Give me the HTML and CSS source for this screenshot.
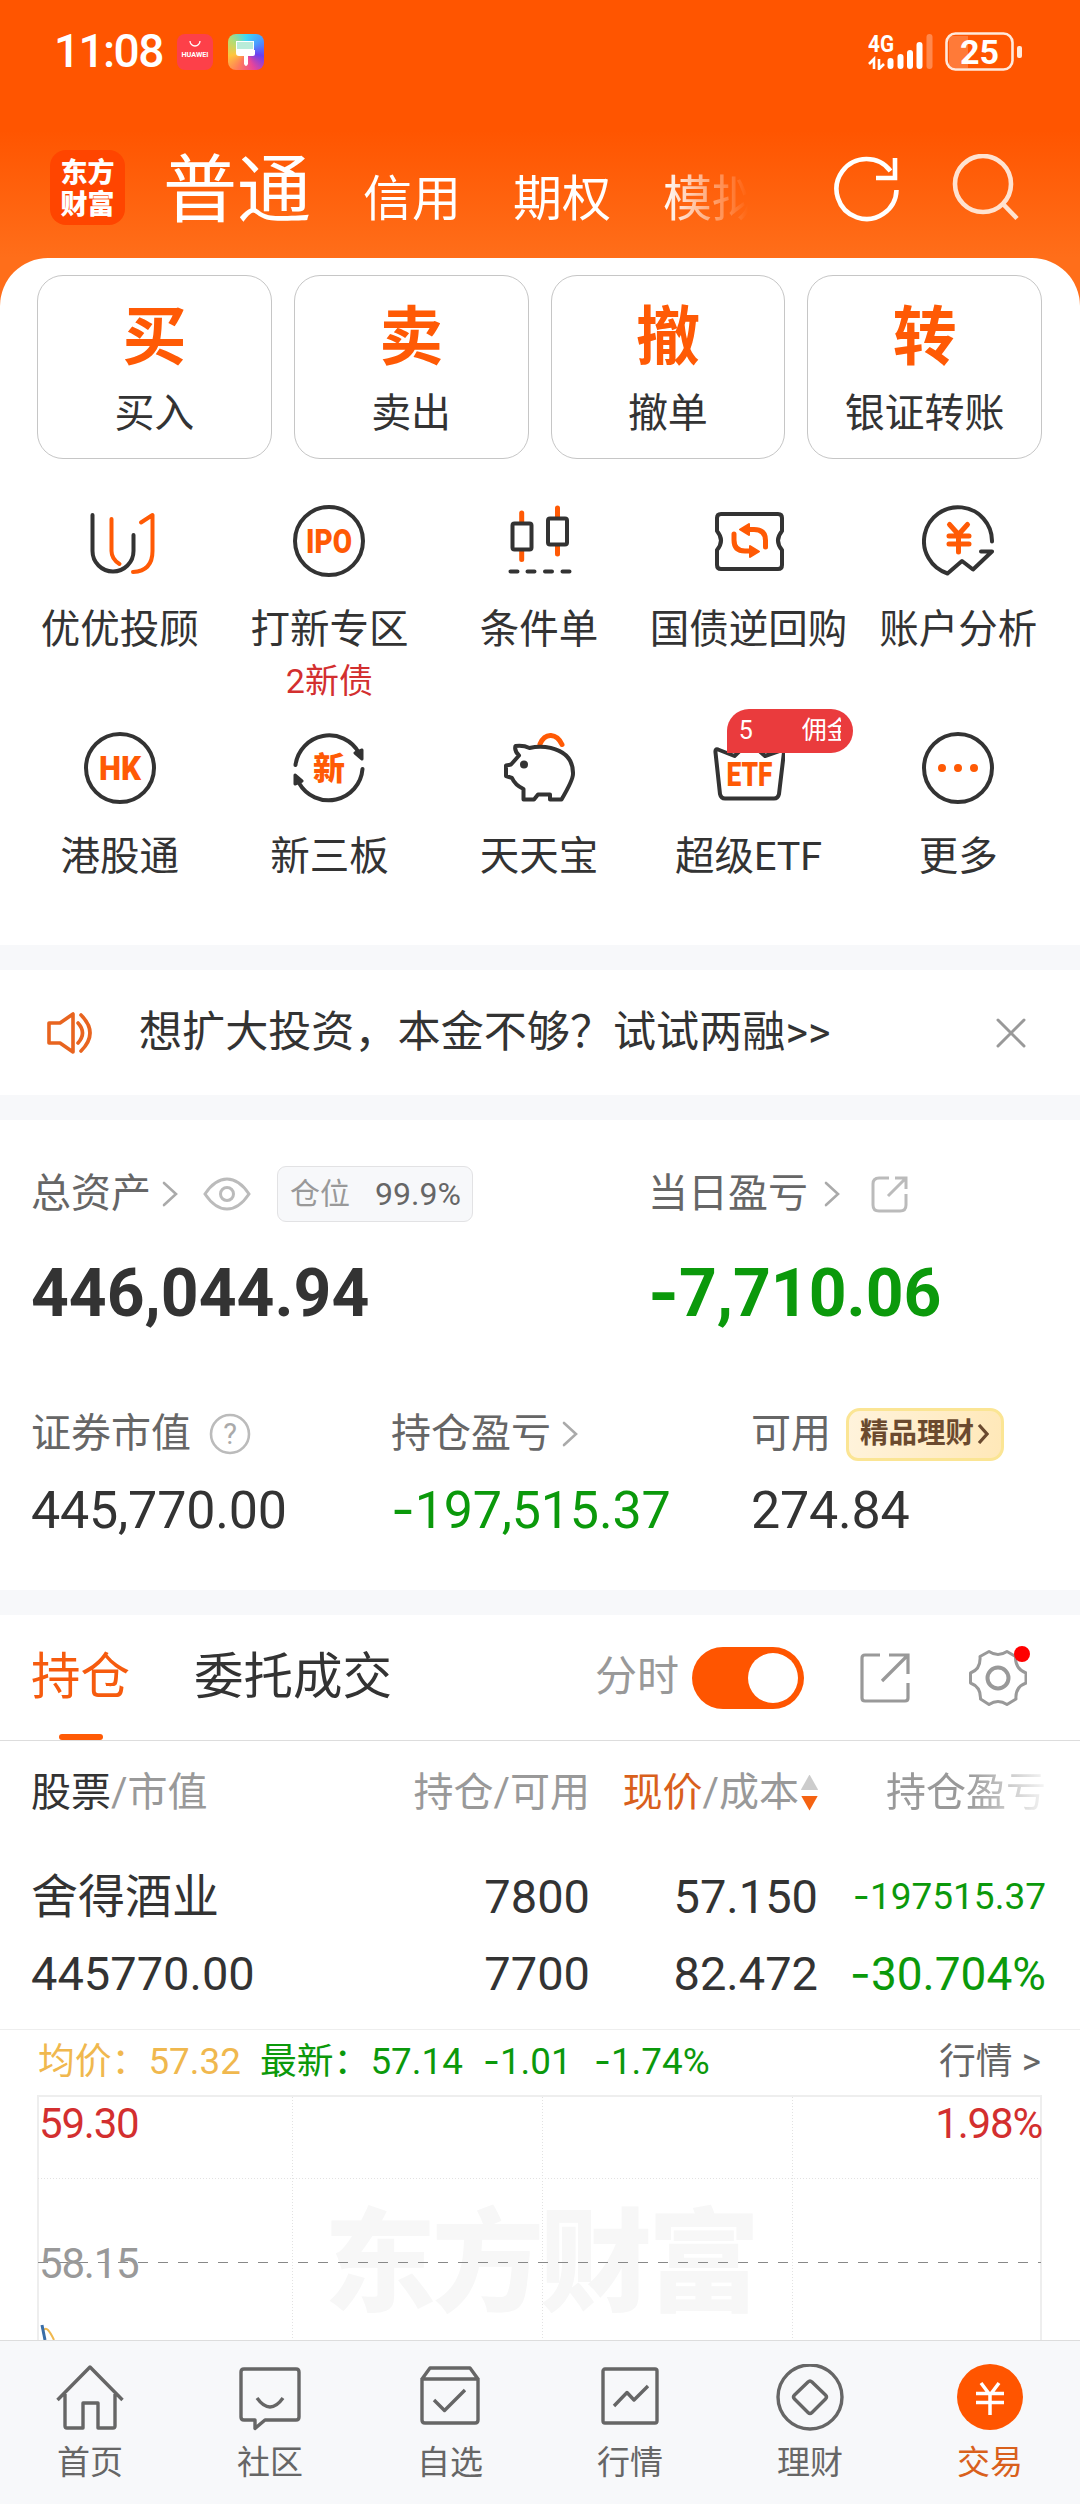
FILE: index.html
```html
<!DOCTYPE html>
<html lang="zh-CN">

<head>
    <meta charset="UTF-8">
    <meta name="viewport" content="width=device-width, initial-scale=1.0">
    <title>东方财富 - 交易</title>
    <link rel="stylesheet" href="styles.css">
</head>

<body>
    <svg class="defs">
        <symbol id="chevron" viewBox="0 0 16 26">
            <path d="M2 2l12 11L2 24" fill="none" stroke="currentColor" stroke-width="2.6" stroke-linecap="round" />
        </symbol>
    </svg>

    <div class="top">
        <!-- status bar -->
        <div class="status-bar">
            <span class="time">11:08</span>
            <svg class="app-icon" width="36" height="36" viewBox="0 0 36 36">
                <rect width="36" height="36" rx="8" fill="#fd4049" />
                <path d="M13 7a5 5 0 0 0 10 0" fill="none" stroke="#fff" stroke-width="1.3" />
                <text x="4.500" y="23" textLength="27" lengthAdjust="spacingAndGlyphs" font-size="7" font-weight="bold" fill="#fff">HUAWEI</text>
            </svg>
            <div class="app-icon theme-icon">
                <svg width="36" height="36" viewBox="0 0 36 36">
                    <path d="M8 7h18v9h1v4q0 2-2 2h-5v8q-2 4-4 0v-8h-5q-3 0-3-3z" fill="#fff" />
                    <path d="M9 8h16v7H9z" fill="#b9ecd9" />
                </svg>
            </div>
            <div class="status-right">
                <svg width="70" height="36" viewBox="0 0 70 36">
                    <text x="0" y="18" class="net" textLength="26" lengthAdjust="spacingAndGlyphs">4G</text>
                    <path d="M6 35V25l-5 5M11 25v10l5-5" fill="none" stroke="#fff" stroke-width="2.6" />
                    <g stroke="#fff" stroke-width="6" stroke-linecap="round">
                        <path d="M22.500 27v5M32.500 23v9M42 19v13M51.500 11v21" />
                        <path d="M61.500 3v29" opacity=".3" />
                    </g>
                </svg>
                <svg width="78" height="40" viewBox="0 0 78 40">
                    <rect x="4" y="4" width="19" height="32" fill="#fff" opacity=".22" />
                    <rect x="1.500" y="1.500" width="66" height="36" rx="9" fill="none" stroke="#ffe9dc" stroke-width="2.600" />
                    <rect x="72" y="14" width="5" height="12" rx="2" fill="#ffe9dc" />
                    <text x="34.500" y="31.500" text-anchor="middle" class="battery">25</text>
                </svg>
            </div>
        </div>

        <!-- account tabs -->
        <div class="header">
            <div class="logo">东方<br>财富</div>
            <div class="account-tabs">
                <span class="current">普通</span>
                <span>信用</span>
                <span>期权</span>
                <span>模拟</span>
            </div>
            <svg class="refresh" width="66" height="68" viewBox="0 0 66 68" fill="none" stroke="#fff" stroke-width="4.600">
                <path d="M62.500 35a30 30 0 1 1-6-19" />
                <path d="M61 3v20H42" />
            </svg>
            <svg class="search" width="68" height="68" viewBox="0 0 68 68" fill="none" stroke="#ffe2d0" stroke-width="4.600">
                <circle cx="31" cy="30" r="28" />
                <path d="M51 50l14 14.500" />
            </svg>
        </div>
    </div>

    <div class="panel">
        <div class="trade-cards">
            <div class="card"><b>买</b><span>买入</span></div>
            <div class="card"><b>卖</b><span>卖出</span></div>
            <div class="card"><b>撤</b><span>撤单</span></div>
            <div class="card"><b>转</b><span>银证转账</span></div>
        </div>

        <div class="menu">
            <div class="menu-item">
                <svg class="icon" viewBox="0 0 72 72">
                    <path d="M8.500 10v36a20.500 20.500 0 0 0 41 0V30" />
                    <path class="hot" d="M27.500 14v32q0 8 8 13M57 17.500L68.500 10v36q0 20-19.500 21" />
                </svg>
                <p>优优投顾</p>
            </div>
            <div class="menu-item">
                <svg class="icon" viewBox="0 0 72 72">
                    <circle cx="36" cy="36" r="34" />
                    <text x="13" y="47.500" textLength="46" lengthAdjust="spacingAndGlyphs">IPO</text>
                </svg>
                <p>打新专区</p>
                <p class="tip">2新债</p>
            </div>
            <div class="menu-item">
                <svg class="icon" viewBox="0 0 72 72">
                    <path class="hot thick" d="M18.700 8v9M18.700 46v8.500M54.500 3v9M54.500 41v8" />
                    <rect x="9.500" y="18.500" width="19" height="26" rx="2" />
                    <rect x="45" y="13.500" width="19" height="26" rx="2" />
                    <path d="M7.500 66.500h7M24.500 66.500h7M42 66.500h7M59.500 66.500h7" />
                </svg>
                <p>条件单</p>
            </div>
            <div class="menu-item">
                <svg class="icon" viewBox="0 0 72 72">
                    <path d="M8 9h57q4 0 4 4v13q-8 9.500 0 19v15q0 4-4 4H8q-4 0-4-4V45q8-9.500 0-19V13q0-4 4-4z" />
                    <path class="hot thick" d="M36 24.500h5q11.500 0 11.500 11V42M21 29v6q0 11 11 11h5" />
                    <path class="hot fill" d="M27 24.500l9-5.500v11zM46 46.500l-9-5.500v11z" />
                </svg>
                <p>国债逆回购</p>
            </div>
            <div class="menu-item">
                <svg class="icon" viewBox="0 0 72 72">
                    <path d="M70 36.500A34 34 0 1 0 25.500 68.500L40 56l11 8.500 19-18H59" />
                    <path class="hot thick" d="M27.500 19.500l9 10 9-10M27 31h20M27 39h20M36.500 30v17" />
                </svg>
                <p>账户分析</p>
            </div>

            <div class="menu-item">
                <svg class="icon" viewBox="0 0 72 72">
                    <circle cx="36" cy="36" r="34" />
                    <text x="15" y="47.500" textLength="42" lengthAdjust="spacingAndGlyphs">HK</text>
                </svg>
                <p>港股通</p>
            </div>
            <div class="menu-item">
                <svg class="icon" viewBox="0 0 72 72">
                    <path d="M2.500 33A34 34 0 0 1 66 21M69.500 37A34 34 0 0 1 6 51" />
                    <path class="dark-fill" d="M69 27l-7-6 7-3zM2 43l7 6-7 3z" />
                    <text x="36" y="48" text-anchor="middle" class="xin">新</text>
                </svg>
                <p>新三板</p>
            </div>
            <div class="menu-item">
                <svg class="icon" viewBox="0 0 72 72">
                    <path class="hot thick" d="M37 12q4-9 11-8.500t11 9" />
                    <path d="M12.500 14q8-1 14 2 8-2 16-1 28 4 27.500 27 0 6-11.500 25.500H47v-5H35l-4 5H20.500V57Q12 53 9 46l-6-2V33.500l5-1 8-9q-5-5-3.500-9.500z" />
                    <circle class="dark-fill" cx="21" cy="32.500" r="2.500" />
                </svg>
                <p>天天宝</p>
            </div>
            <div class="menu-item">
                <svg class="icon" viewBox="0 0 72 72">
                    <path d="M21.500 24L5 17.500q-3-1-2.500 3L7 62q1 4.500 5 4.500h49q4 0 5-4.500l5-42q0-3-2-2l-17 6L36 10z" />
                    <text x="13.500" y="54" textLength="46" lengthAdjust="spacingAndGlyphs">ETF</text>
                </svg>
                <div class="badge"><span>5</span><span class="clip">佣金</span></div>
                <p>超级ETF</p>
            </div>
            <div class="menu-item">
                <svg class="icon" viewBox="0 0 72 72">
                    <circle cx="36" cy="36" r="34" />
                    <path class="hot dots" d="M20 36h0M36 36h0M52 36h0" />
                </svg>
                <p>更多</p>
            </div>
        </div>
    </div>

    <div class="notice">
        <svg width="48" height="44" viewBox="0 0 48 44" fill="none" stroke="#e8641f" stroke-width="3.600" stroke-linecap="round" stroke-linejoin="round">
            <path d="M3 12h11L27 3v38L14 32H3z" />
            <path d="M32 12q9 10 0 20M35 4q18 18 0 36" />
        </svg>
        <p>想扩大投资，本金不够？试试两融&gt;&gt;</p>
        <svg class="close" width="30" height="30" viewBox="0 0 30 30">
            <path d="M2 2l26 26M28 2L2 28" stroke="#999" stroke-width="3" stroke-linecap="round" />
        </svg>
    </div>

    <div class="assets">
        <div class="main-row">
            <div class="asset total">
                <div class="asset-label">
                    总资产
                    <svg class="chev"><use href="#chevron" /></svg>
                    <svg class="eye" width="48" height="34" viewBox="0 0 48 34" fill="none" stroke="#bbb" stroke-width="3">
                        <path d="M2 17Q12 2 24 2t22 15Q36 32 24 32T2 17z" />
                        <circle cx="24" cy="17" r="6.500" />
                    </svg>
                    <span class="ratio"><i>仓位</i>99.9%</span>
                </div>
                <div class="big-num">446,044.94</div>
            </div>
            <div class="asset">
                <div class="asset-label">
                    当日盈亏
                    <svg class="chev wide"><use href="#chevron" /></svg>
                    <svg class="share" width="37" height="37" viewBox="0 0 37 37" fill="none" stroke="#bbb" stroke-width="3">
                        <path d="M18 2H8Q2 2 2 8v21q0 6 6 6h21q6 0 6-6V18M17 20L34 3M24 2h11v11" />
                    </svg>
                </div>
                <div class="big-num down"><span class="minus">-</span>7,710.06</div>
            </div>
        </div>
        <div class="sub-row">
            <div class="asset">
                <div class="asset-label">
                    证券市值
                    <svg class="help" width="42" height="42" viewBox="0 0 42 42">
                        <circle cx="21" cy="21" r="19" fill="none" stroke="#bbb" stroke-width="2.600" />
                        <text x="21" y="31" text-anchor="middle">?</text>
                    </svg>
                </div>
                <div class="num">445,770.00</div>
            </div>
            <div class="asset">
                <div class="asset-label">
                    持仓盈亏
                    <svg class="chev near"><use href="#chevron" /></svg>
                </div>
                <div class="num down"><span class="minus">-</span>197,515.37</div>
            </div>
            <div class="asset">
                <div class="asset-label">
                    可用
                    <span class="wealth">精品理财<svg width="12" height="20" viewBox="0 0 12 20"><path d="M2 1l8 9-8 9" fill="none" stroke="#6b4a2f" stroke-width="3.200" /></svg></span>
                </div>
                <div class="num">274.84</div>
            </div>
        </div>
    </div>

    <div class="positions">
        <div class="pos-tabs">
            <span class="pos-tab active">持仓</span>
            <span class="pos-tab">委托成交</span>
            <div class="tools">
                <span>分时</span>
                <div class="switch"></div>
                <svg class="open" width="50" height="50" viewBox="0 0 50 50" fill="none" stroke="#999" stroke-width="3.200">
                    <path d="M20 2H5Q2 2 2 5v40q0 3 3 3h40q3 0 3-3V30M22 28L47 3M29 2h19v19" />
                </svg>
                <div class="gear">
                    <svg width="58" height="58" viewBox="0 0 58 58" fill="none" stroke="#999" stroke-width="3" stroke-linejoin="round">
                        <path d="M20 2.500q9 6 18 0l8.500 5Q46 20 57 24v10q-11 4-10 16l-9 5.500q-9-6-18 0L11.500 50Q12 38 1.500 34V24Q12 20 11 7.500z" />
                        <circle cx="29" cy="29" r="10.500" stroke-width="4" />
                    </svg>
                    <i class="dot"></i>
                </div>
            </div>
        </div>

        <div class="row row-head">
            <span><b>股票</b>/市值</span>
            <span>持仓/可用</span>
            <span class="sorted"><b class="hot-text">现价</b>/成本<i class="sort"></i></span>
            <span class="fade">持仓盈亏</span>
        </div>
        <div class="stock">
            <div class="row">
                <span class="name">舍得酒业</span>
                <span>7800</span>
                <span>57.150</span>
                <span class="down small"><span class="minus">-</span>197515.37</span>
            </div>
            <div class="row">
                <span>445770.00</span>
                <span>7700</span>
                <span>82.472</span>
                <span class="down rate"><span class="minus">-</span>30.704%</span>
            </div>
        </div>

        <div class="quote">
            <span class="avg">均价：57.32</span>
            <span class="last">最新：57.14</span>
            <span class="chg"><span class="minus">-</span>1.01</span>
            <span class="pct"><span class="minus">-</span>1.74%</span>
            <span class="more">行情 &gt;</span>
        </div>

        <svg class="chart" width="1008" height="245" viewBox="0 0 1008 245">
            <text class="watermark" x="288" y="208" textLength="436">东方财富</text>
            <path d="M2 245V1h1003v244" fill="none" stroke="#eee" stroke-width="2" />
            <path d="M256.500 2v243M506.500 2v243M756.500 2v243M2 83.500h1002" fill="none" stroke="#e2e2e2" stroke-dasharray="1 2" />
            <path d="M2 167.500h1003" stroke="#888" stroke-width="1" stroke-dasharray="10 10" />
            <text x="3" y="43" class="up">59.30</text>
            <text x="3" y="183" class="mid">58.15</text>
            <text x="1006" y="43" class="up" text-anchor="end">1.98%</text>
            <path d="M8 235q3-5 10 10" fill="none" stroke="#f0b84e" stroke-width="2" />
            <path d="M6 230l3 15" fill="none" stroke="#3a6ea8" stroke-width="3" />
        </svg>
    </div>

    <div class="nav">
        <div class="nav-item">
            <svg viewBox="0 0 68 68">
                <path d="M1.500 36L34 3l32.500 33M9 30v32q0 2 2 2h16V39h15v25h15q2 0 2-2V30" />
            </svg>
            <span>首页</span>
        </div>
        <div class="nav-item">
            <svg viewBox="0 0 68 68">
                <path d="M8 5h52q3 0 3 3v45q0 3-3 3H29l-10 8.500V56H8q-3 0-3-3V8q0-3 3-3z" />
                <path d="M21 34q13 18 26 0" />
            </svg>
            <span>社区</span>
        </div>
        <div class="nav-item">
            <svg viewBox="0 0 68 68">
                <path d="M6 14v42q0 3 3 3h50q3 0 3-3V14M6 15h56L54 4H14z" />
                <path d="M18 36l10.500 10.500L49 26" />
            </svg>
            <span>自选</span>
        </div>
        <div class="nav-item">
            <svg viewBox="0 0 68 68">
                <rect x="7" y="5" width="54" height="54" rx="2" />
                <path d="M18 42l13-13.500 7 7.500 14-14" />
            </svg>
            <span>行情</span>
        </div>
        <div class="nav-item">
            <svg viewBox="0 0 68 68">
                <circle cx="34" cy="33" r="32" />
                <path d="M32 18q2-2 4 0l13.500 13q2 2 0 4L36 48.500q-2 2-4 0L18.500 35q-2-2 0-4z" />
            </svg>
            <span>理财</span>
        </div>
        <div class="nav-item active">
            <svg viewBox="0 0 68 68">
                <circle class="coin" cx="34" cy="33" r="33" />
                <path class="yen" d="M25 19l9 12 9-12M20 29.500h28M20 38.500h28M34 30v21" />
            </svg>
            <span>交易</span>
        </div>
    </div>
</body>

</html>
```
FILE: styles.css
```css
* {
    box-sizing: border-box;
}

body {
    margin: 0;
    width: 1080px;
    background: #fff;
    color: #333;
    font-family: Roboto, "Noto Sans CJK SC", sans-serif;
    font-size: 40px;
    line-height: 1.2;
}

p {
    margin: 0;
}

i {
    font-style: normal;
}

svg {
    display: block;
    flex: none;
}

.defs {
    position: absolute;
    width: 0;
    height: 0;
}

/* top */

.top {
    height: 306px;
    margin-bottom: -48px;
    background: linear-gradient(#ff5500 130px, #ff6e1a 258px);
    color: #fff;
}

.status-bar {
    display: flex;
    align-items: center;
    height: 104px;
    padding: 0 57px 0 54px;
}

.time {
    width: 123px;
    font-size: 46px;
    font-weight: 500;
    letter-spacing: -1.6px;
}

.app-icon {
    margin-right: 15px;
}

.theme-icon {
    border-radius: 8px;
    background: conic-gradient(#3fd8f5, #4b9bff, #6a3ff0, #e8459a, #ff7a5a, #ffc53d, #b5dc72, #3fd8f5);
}

.status-right {
    display: flex;
    align-items: center;
    gap: 7px;
    margin-left: auto;
}

.net {
    font-size: 24px;
    font-weight: bold;
    fill: #fff;
}

.battery {
    font-size: 34px;
    font-weight: bold;
    fill: #fff;
}

.header {
    display: flex;
    height: 154px;
    padding-left: 50px;
}

.logo {
    width: 75px;
    height: 75px;
    margin-top: 46px;
    padding-top: 5px;
    border-radius: 16px;
    background: #ff4500;
    font-family: "Noto Sans CJK SC", sans-serif;
    font-size: 27px;
    font-weight: 900;
    line-height: 32px;
    text-align: center;
}

.account-tabs {
    display: flex;
    align-items: baseline;
    width: 592px;
    height: 117px;
    margin: 37px 0 0 38px;
    gap: 52px;
    overflow: hidden;
    white-space: nowrap;
    font-size: 49px;
    line-height: 100px;
    -webkit-mask-image: linear-gradient(to right, #000 500px, transparent 585px);
    mask-image: linear-gradient(to right, #000 500px, transparent 585px);
}

.account-tabs .current {
    font-size: 74px;
}

.refresh {
    margin: 51px 0 0 79px;
}

.search {
    margin: 50px 0 0 52px;
}

/* trade panel */

.panel {
    height: 687px;
    padding-top: 17px;
    border-radius: 48px 48px 0 0;
    background: #fff;
}

.trade-cards {
    display: grid;
    grid-template-columns: repeat(4, 1fr);
    gap: 22px;
    padding: 0 38px 0 37px;
}

.card {
    display: flex;
    flex-direction: column;
    align-items: center;
    height: 184px;
    border: 1px solid #c6c6c6;
    border-radius: 26px;
}

.card b {
    margin-top: 17px;
    color: #ff5a05;
    font-size: 64px;
    line-height: 90px;
}

.card span {
    margin-top: 5px;
    font-size: 40px;
    line-height: 52px;
}

.menu {
    display: grid;
    grid-template-columns: repeat(5, 1fr);
    grid-auto-rows: 227px;
    padding: 46px 17px 0 15px;
}

.menu-item {
    position: relative;
    display: flex;
    flex-direction: column;
    align-items: center;
    white-space: nowrap;
    font-size: 39.5px;
    line-height: 50px;
}

.icon {
    width: 72px;
    height: 72px;
    margin-bottom: 28px;
    fill: none;
    stroke: #333;
    stroke-width: 4px;
    stroke-linecap: round;
    stroke-linejoin: round;
}

.icon .hot {
    stroke: #ff5a05;
}

.icon .thick {
    stroke-width: 5px;
}

.icon .fill {
    fill: #ff5a05;
    stroke-width: 2px;
}

.icon .dark-fill {
    fill: #333;
    stroke-width: 3px;
}

.icon .dots {
    stroke-width: 8px;
}

.icon text {
    fill: #ff5a05;
    stroke: none;
    font-size: 33px;
    font-weight: 900;
}

.icon .xin {
    font-size: 32px;
}

.menu-item .tip {
    margin-top: 4px;
    color: #d32f2f;
    font-size: 34px;
    line-height: 44px;
}

.badge {
    position: absolute;
    top: -23px;
    left: 83px;
    display: flex;
    justify-content: space-between;
    width: 126px;
    height: 44px;
    padding: 0 12px;
    border-radius: 22px 22px 22px 0;
    background: #ea3b3d;
    color: #fff;
    font-size: 25px;
    line-height: 43px;
}

.badge .clip {
    width: 39px;
    overflow: hidden;
}

/* notice */

.notice {
    display: flex;
    align-items: center;
    height: 175px;
    padding: 0 54px 0 46px;
    border: solid #f7f8fa;
    border-width: 25px 0;
}

.notice p {
    margin-left: 45px;
    font-size: 43.1px;
}

.notice .close {
    margin-left: auto;
}

/* assets */

.assets {
    height: 495px;
    padding: 44px 0 0 31px;
    border-bottom: 25px solid #f7f8fa;
}

.main-row {
    display: grid;
    grid-template-columns: 617px 1fr;
    height: 240px;
}

.sub-row {
    display: grid;
    grid-template-columns: 360px 360px 1fr;
}

.asset-label {
    display: flex;
    align-items: center;
    height: 60px;
    color: #666;
    white-space: nowrap;
}

.chev {
    width: 16px;
    height: 26px;
    margin-left: 11px;
    color: #aaa;
}

.chev.wide {
    margin-left: 16px;
}

.eye {
    margin-left: 25px;
}

.ratio {
    display: flex;
    align-items: center;
    height: 56px;
    margin-left: 26px;
    padding: 0 11px 0 12px;
    border: 1px solid #e2e2e4;
    border-radius: 9px;
    background: #f7f8fa;
    font-size: 32px;
}

.ratio i {
    margin-right: 25px;
    color: #999;
    font-size: 30px;
}

.share {
    margin-left: 31px;
}

.big-num {
    margin-top: 30px;
    font-size: 66px;
    font-weight: bold;
    line-height: 80px;
}

.num {
    margin-top: 7px;
    font-size: 52px;
    line-height: 80px;
    letter-spacing: -0.2px;
}

.down {
    color: #0b990b;
}

.minus {
    font-family: Inter, sans-serif;
    line-height: 0;
}

.help {
    margin-left: 18px;
}

.help text {
    fill: #aaa;
    font-size: 29px;
}

.wealth {
    display: flex;
    align-items: center;
    width: 158px;
    height: 53px;
    margin-left: 15px;
    padding-left: 11px;
    border: 3px solid #fbe594;
    border-radius: 14px 14px 14px 12px;
    background: linear-gradient(100deg, #fff3dc, #ffe8b8);
    color: #6b4a2f;
    font-size: 28.5px;
    font-weight: bold;
}

.wealth svg {
    margin-left: 3px;
}

/* positions */

.pos-tabs {
    display: flex;
    align-items: center;
    height: 126px;
    padding: 0 53px 0 31px;
    border-bottom: 1px solid #ddd;
    font-size: 49.5px;
}

.pos-tab {
    position: relative;
    margin-right: 64px;
}

.pos-tab.active {
    color: #f65b0e;
}

.pos-tab.active::after {
    content: "";
    position: absolute;
    left: 28px;
    bottom: -33px;
    width: 44px;
    height: 6px;
    border-radius: 3px;
    background: #ff5a05;
}

.tools {
    display: flex;
    align-items: center;
    margin-left: auto;
    color: #999;
    font-size: 42px;
}

.switch {
    width: 112px;
    height: 62px;
    margin-left: 13px;
    padding: 6px;
    border-radius: 31px;
    background: #ff5500;
}

.switch::after {
    content: "";
    display: block;
    width: 50px;
    height: 50px;
    margin-left: auto;
    border-radius: 50%;
    background: #fff;
}

.open {
    margin-left: 56px;
}

.gear {
    position: relative;
    margin-left: 59px;
}

.dot {
    position: absolute;
    top: -3px;
    right: -3px;
    width: 16px;
    height: 16px;
    border-radius: 50%;
    background: #f00;
}

.row {
    display: grid;
    grid-template-columns: 300px 259px 228px 228px;
    align-items: center;
    height: 77px;
    padding-left: 31px;
    text-align: right;
    white-space: nowrap;
    font-size: 47px;
}

.row > :first-child {
    text-align: left;
}

.row-head {
    height: 103px;
    color: #999;
    font-size: 40px;
}

.row-head b {
    color: #333;
    font-weight: normal;
}

.row-head .hot-text {
    color: #d9601c;
}

.sorted {
    display: flex;
    align-items: center;
    justify-content: flex-end;
}

.sort {
    width: 17px;
    height: 36px;
    margin-left: 2px;
    background: linear-gradient(#ccc, #ccc) top / 17px 15px no-repeat, linear-gradient(#f56312, #f56312) bottom / 17px 15px no-repeat;
    clip-path: polygon(50% 0, 100% 15px, 100% 21px, 50% 100%, 0 21px, 0 15px);
}

.fade {
    -webkit-mask-image: linear-gradient(to right, #000 150px, transparent 235px);
    mask-image: linear-gradient(to right, #000 150px, transparent 235px);
}

.stock {
    height: 186px;
    padding-top: 15px;
    border-bottom: 1px solid #eee;
}

.row .small {
    font-size: 37px;
}

.row .rate {
    font-size: 46px;
}

.quote {
    display: flex;
    align-items: center;
    height: 65px;
    padding: 0 39px 0 38px;
    color: #0b990b;
    font-size: 36.8px;
    white-space: nowrap;
}

.quote .avg {
    width: 222px;
    color: #f0b84e;
}

.quote .last {
    width: 223px;
}

.quote .chg {
    width: 111px;
}

.quote .more {
    margin-left: auto;
    color: #666;
}

.chart {
    margin-left: 36px;
    overflow: hidden;
    font-size: 42px;
    letter-spacing: -1.2px;
}

.chart .up {
    fill: #d32f2f;
}

.chart .mid {
    fill: #999;
}

.watermark {
    fill: #f7f7f7;
    font-size: 112px;
    font-weight: 900;
    letter-spacing: 0;
}

/* bottom nav */

.nav {
    display: grid;
    grid-template-columns: repeat(6, 1fr);
    height: 164px;
    border-top: 1px solid #ddd;
    background: #f7f8fa;
}

.nav-item {
    display: flex;
    flex-direction: column;
    align-items: center;
    padding-top: 23px;
    color: #666;
    font-size: 33px;
    line-height: 44px;
}

.nav-item svg {
    width: 68px;
    height: 68px;
    margin-bottom: 9px;
    fill: none;
    stroke: #666;
    stroke-width: 3.4px;
    stroke-linejoin: round;
}

.nav-item.active {
    color: #d9601c;
}

.nav-item .coin {
    fill: #ff5500;
    stroke: none;
}

.nav-item .yen {
    stroke: #fff;
    stroke-width: 3.5px;
}
```
